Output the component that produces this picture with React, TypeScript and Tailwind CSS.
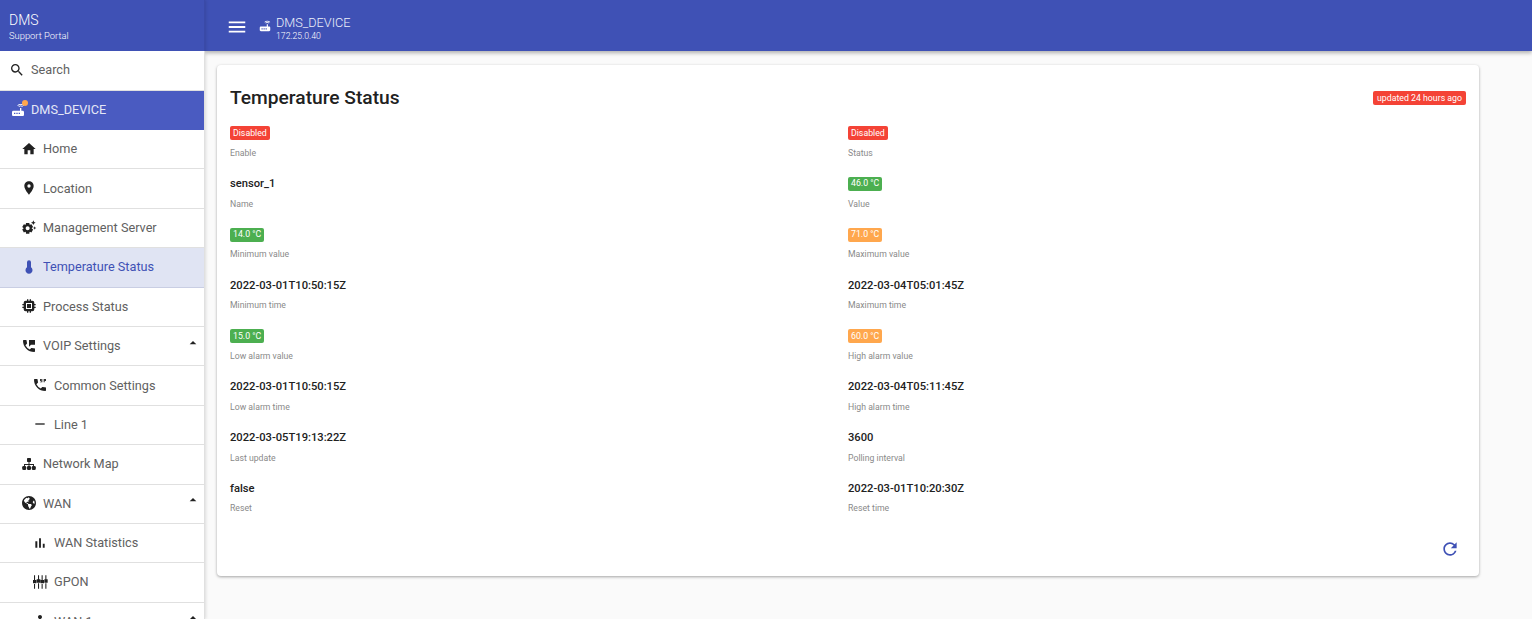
import React from 'react';
import {
  MdMenu,
  MdSearch,
  MdRouter,
  MdHome,
  MdLocationOn,
  MdSettingsSuggest,
  MdPermPhoneMsg,
  MdDialerSip,
  MdRemove,
  MdArrowDropUp,
  MdRefresh,
  MdDeviceHub,
} from 'react-icons/md';
import { FaGlobeAmericas } from 'react-icons/fa';

const fontStack = { fontFamily: 'Roboto, "Liberation Sans", sans-serif' };

function GponIcon({ className }: { className?: string }) {
  return (
    <svg viewBox="0 0 24 24" className={className} fill="currentColor">
      <path d="M3 2h1.6v7H6.5v5H1.5V9H3zM3 15h1.6v7H3zM9 2h1.6v6h2v5H7V8h2zM9 14h1.6v8H9zM14.4 2H16v7h2v5h-5.1V9h1.5zM14.4 15H16v7h-1.6zM20 2h1.6v6h1.9v5h-5V8H20zM20 14h1.6v8H20z" />
    </svg>
  );
}

function BarsIcon({ className }: { className?: string }) {
  return (
    <svg viewBox="0 0 24 24" className={className} fill="currentColor">
      <path d="M5 9.2h3V19H5zM10.6 5h2.8v14h-2.8zm5.6 8H19v6h-2.8z" />
    </svg>
  );
}

function ThermoIcon({ className }: { className?: string }) {
  return (
    <svg viewBox="0 0 24 24" className={className} fill="currentColor">
      <path d="M15 12.5V5a3 3 0 0 0-6 0v7.5a5.25 5.25 0 1 0 6 0z" />
    </svg>
  );
}

function ChipIcon({ className }: { className?: string }) {
  return (
    <svg viewBox="0 0 24 24" className={className} fill="currentColor">
      <path d="M9 2h2v3H9zM13 2h2v3h-2zM9 19h2v3H9zM13 19h2v3h-2zM2 9h3v2H2zM2 13h3v2H2zM19 9h3v2h-3zM19 13h3v2h-3z" />
      <path fillRule="evenodd" d="M7 4h10a3 3 0 0 1 3 3v10a3 3 0 0 1-3 3H7a3 3 0 0 1-3-3V7a3 3 0 0 1 3-3zM7.5 7.5v9h9v-9z" />
      <rect x="9" y="9" width="6" height="6" />
    </svg>
  );
}

function SitemapIcon({ className }: { className?: string }) {
  return (
    <svg viewBox="0 0 24 24" className={className} fill="currentColor">
      <rect x="9" y="3" width="6" height="6" rx="1" />
      <path d="M11.3 9h1.4v3h6.8v3.5h-1.4v-2.1h-5.4v2.1h-1.4v-2.1H5.9v2.1H4.5V12h6.8z" />
      <rect x="1.8" y="15" width="6" height="6" rx="2" />
      <rect x="9" y="15" width="6" height="6" rx="2" />
      <rect x="16.2" y="15" width="6" height="6" rx="2" />
    </svg>
  );
}

function GlobeIcon({ className }: { className?: string }) {
  return <FaGlobeAmericas className={`${className} scale-90`} />;
}

type NavItem = {
  label: string;
  icon: React.ComponentType<{ className?: string }>;
  sub?: boolean;
  active?: boolean;
  caret?: boolean;
};

const navItems: NavItem[] = [
  { label: 'Home', icon: MdHome },
  { label: 'Location', icon: MdLocationOn },
  { label: 'Management Server', icon: MdSettingsSuggest },
  { label: 'Temperature Status', icon: ThermoIcon, active: true },
  { label: 'Process Status', icon: ChipIcon },
  { label: 'VOIP Settings', icon: MdPermPhoneMsg, caret: true },
  { label: 'Common Settings', icon: MdDialerSip, sub: true },
  { label: 'Line 1', icon: MdRemove, sub: true },
  { label: 'Network Map', icon: SitemapIcon },
  { label: 'WAN', icon: GlobeIcon, caret: true },
  { label: 'WAN Statistics', icon: BarsIcon, sub: true },
  { label: 'GPON', icon: GponIcon, sub: true },
  { label: 'WAN 1', icon: MdDeviceHub, sub: true, caret: true },
];

type Field = { label: string; value: string; badge?: 'red' | 'green' | 'orange' };

const fields: Field[] = [
  { label: 'Enable', value: 'Disabled', badge: 'red' },
  { label: 'Status', value: 'Disabled', badge: 'red' },
  { label: 'Name', value: 'sensor_1' },
  { label: 'Value', value: '46.0 °C', badge: 'green' },
  { label: 'Minimum value', value: '14.0 °C', badge: 'green' },
  { label: 'Maximum value', value: '71.0 °C', badge: 'orange' },
  { label: 'Minimum time', value: '2022-03-01T10:50:15Z' },
  { label: 'Maximum time', value: '2022-03-04T05:01:45Z' },
  { label: 'Low alarm value', value: '15.0 °C', badge: 'green' },
  { label: 'High alarm value', value: '60.0 °C', badge: 'orange' },
  { label: 'Low alarm time', value: '2022-03-01T10:50:15Z' },
  { label: 'High alarm time', value: '2022-03-04T05:11:45Z' },
  { label: 'Last update', value: '2022-03-05T19:13:22Z' },
  { label: 'Polling interval', value: '3600' },
  { label: 'Reset', value: 'false' },
  { label: 'Reset time', value: '2022-03-01T10:20:30Z' },
];

function Badge({ color, wide, children }: { color: 'red' | 'green' | 'orange'; wide?: boolean; children: React.ReactNode }) {
  const bg = color === 'red' ? 'bg-[#f44336]' : color === 'green' ? 'bg-[#4caf50]' : 'bg-[#ffa74d]';
  return (
    <span className={`inline-flex h-[14px] items-center rounded-[2px] text-[8.75px] leading-none text-white ${wide ? 'px-[4px]' : 'px-[3px]'} ${bg}`}>
      {children}
    </span>
  );
}

function SideRow({ item }: { item: NavItem }) {
  const Icon = item.icon;
  return (
    <div
      className={`flex h-[39.4px] shrink-0 items-center border-b pb-[1px] text-[12.7px] ${
        item.active ? 'border-[#c9cee3] bg-[#e0e4f3] text-[#3f51b5]' : 'border-[#e0e0e0] text-[#616161]'
      } ${item.sub ? 'pl-[32px]' : 'pl-[21px]'}`}
    >
      <Icon className={`h-4 w-4 shrink-0 ${item.active ? 'text-[#3f51b5]' : 'text-[#212121]'}`} />
      <span className="ml-[6px]">{item.label}</span>
      {item.caret && <MdArrowDropUp className="ml-auto mr-[3px] -mt-[6px] h-[16px] w-[16px] text-[#212121]" />}
    </div>
  );
}

export default function App() {
  return (
    <div className="flex h-[619px] w-[1532px] overflow-hidden bg-[#fafafa]" style={fontStack}>
      <aside className="relative z-20 flex h-full w-[205px] shrink-0 flex-col overflow-hidden bg-white shadow-[1px_0_3px_rgba(0,0,0,0.12)]">
        <div className="flex h-[51px] shrink-0 flex-col justify-center border-r border-[#3a4aa8] bg-[#3f51b5] pl-[9px] text-white">
          <div className="mt-[3px] text-[14px] font-light leading-[17px]">DMS</div>
          <div className="text-[9.4px] font-light leading-[13px] text-white">Support Portal</div>
        </div>
        <div className="flex min-h-0 flex-1 flex-col border-r border-[#e0e0e0]">
          <div className="flex h-[40px] shrink-0 items-center border-b border-[#e0e0e0] pb-[2px] pl-[9px] text-[12.7px] text-[#616161]">
            <MdSearch className="h-4 w-4 text-[#212121]" />
            <span className="ml-[6px]">Search</span>
          </div>
          <div className="flex h-[39px] shrink-0 items-center bg-[#4a5bc1] pb-[1px] pl-[10px] text-[12.7px] text-[#e4e7f6]">
            <div className="relative h-4 w-4">
              <MdRouter className="h-4 w-4 text-white" />
              <span className="absolute right-[-2px] top-[-2px] h-[6px] w-[6px] rounded-full bg-[#ffa74d]" />
            </div>
            <span className="ml-[5px]">DMS_DEVICE</span>
          </div>
          {navItems.map((item) => (
            <SideRow key={item.label} item={item} />
          ))}
        </div>
      </aside>

      <div className="flex h-full min-w-0 flex-1 flex-col">
        <header className="relative z-10 flex h-[51px] shrink-0 items-center bg-[#3f51b5] pl-[21px] text-white shadow-[0_2px_4px_rgba(0,0,0,0.3)]">
          <MdMenu className="mt-[2px] h-[22px] w-[22px]" />
          <MdRouter className="ml-[10px] mt-[1px] h-[14px] w-[14px]" />
          <div className="ml-[4px] mt-[5px]">
            <div className="text-[12.7px] font-light leading-[15px] text-[#eef0fa]">DMS_DEVICE</div>
            <div className="text-[8.7px] font-light leading-[12px] text-white">172.25.0.40</div>
          </div>
        </header>

        <main className="min-h-0 flex-1 pl-[12px] pr-[53px] pt-[14px]">
          <div className="h-[511px] rounded-[4px] bg-white px-[13px] pt-[13px] shadow-[0_1px_3px_rgba(0,0,0,0.35)]">
            <div className="flex h-[48px] items-center justify-between pb-[8px]">
              <h1 className="text-[19.2px] font-medium leading-none text-[#212121]">Temperature Status</h1>
              <Badge color="red" wide>updated 24 hours ago</Badge>
            </div>
            <div className="grid grid-cols-2">
              {fields.map((f) => (
                <div key={f.label} className="h-[50.8px]">
                  <div className="flex h-[14px] items-center">
                    {f.badge ? (
                      <Badge color={f.badge}>{f.value}</Badge>
                    ) : (
                      <span className="pt-[1px] text-[11.2px] font-medium text-[#212121]">{f.value}</span>
                    )}
                  </div>
                  <div className="mt-[6.8px] text-[8.7px] leading-[13px] text-[#8a8a8a]">{f.label}</div>
                </div>
              ))}
            </div>
            <div className="mt-[7px] flex justify-end pr-[6px]">
              <MdRefresh className="h-[20px] w-[20px] text-[#3f51b5]" />
            </div>
          </div>
        </main>
      </div>
    </div>
  );
}
